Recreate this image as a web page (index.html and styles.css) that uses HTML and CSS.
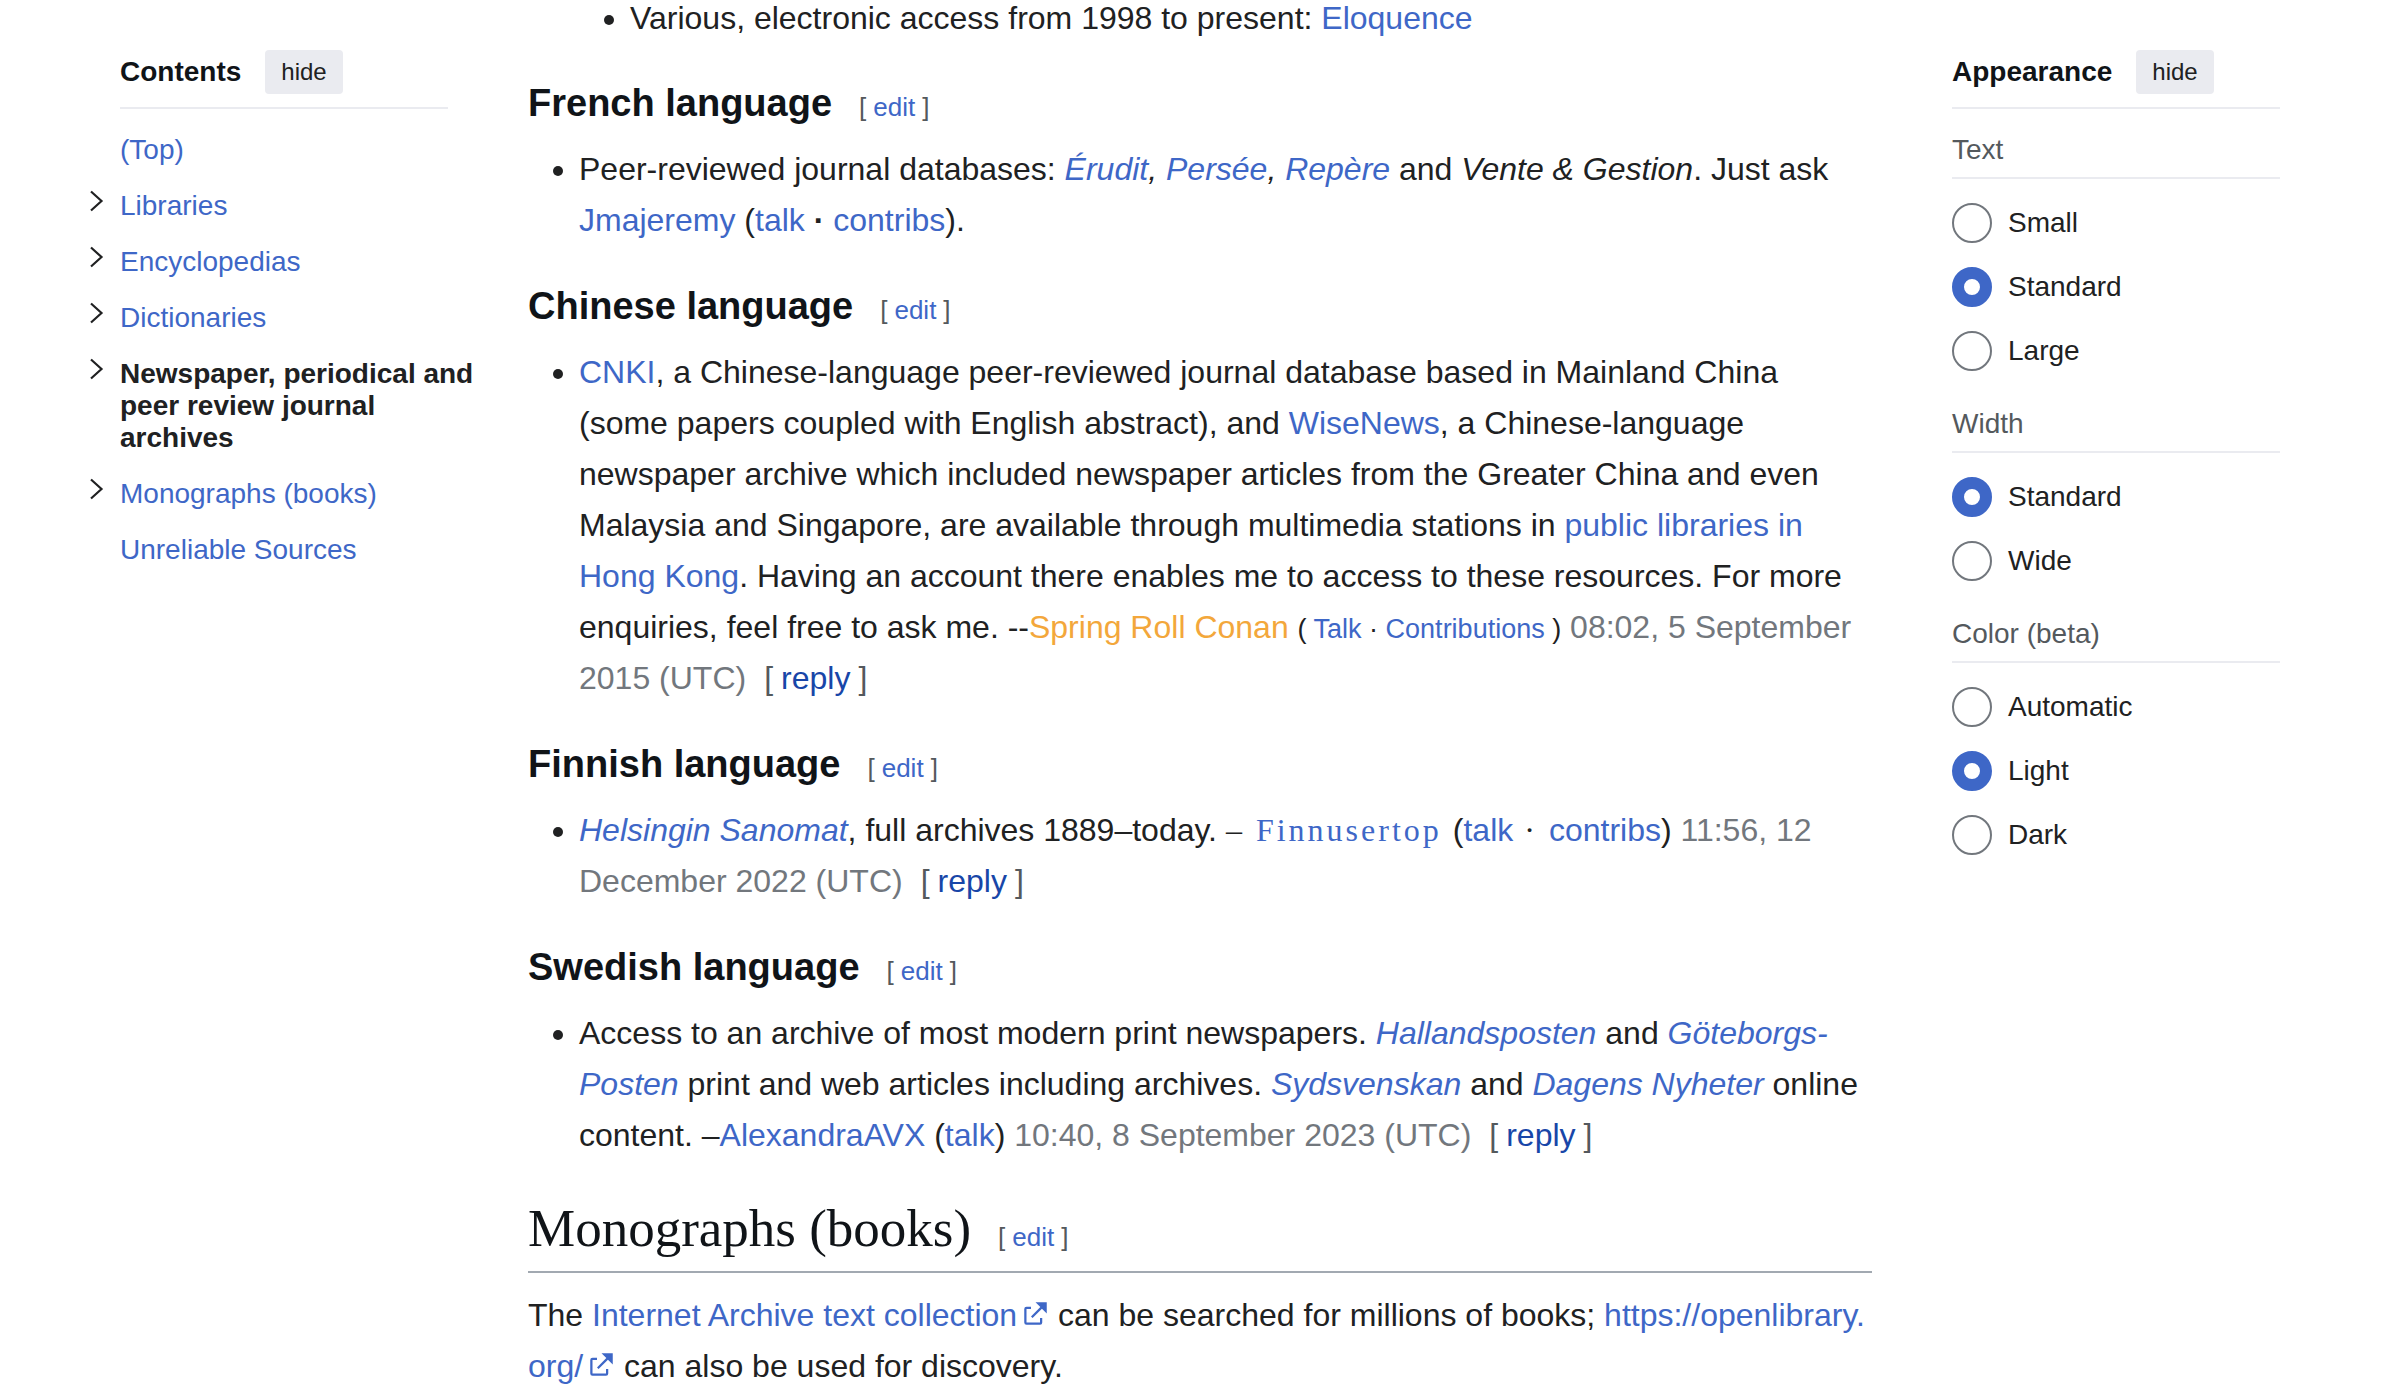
FILE: index.html
```html
<!DOCTYPE html>
<html lang="en">
<head>
<meta charset="utf-8">
<meta name="viewport" content="width=device-width, initial-scale=1">
<title>Resource exchange: shared resources</title>
<link rel="stylesheet" href="styles.css">
</head>
<body>
<svg class="sprite" aria-hidden="true">
  <symbol id="chevron" viewBox="0 0 14 22"><path d="M1 1.500 11.500 11 1 20.500" fill="none" stroke="currentColor" stroke-width="2.200"/></symbol>
  <symbol id="external" viewBox="0 0 12 12"><path fill="currentColor" d="M6 1h5v5L8.860 3.850 4.700 8 4 7.300l4.150-4.160zM2 3h2v1H2v6h6V8h1v2a1 1 0 0 1-1 1H2a1 1 0 0 1-1-1V4a1 1 0 0 1 1-1"/></symbol>
</svg>
<div class="page">
  <nav class="toc" aria-label="Contents">
    <div class="panel-header toc-header">
      <h2 class="panel-title">Contents</h2>
      <button class="hide-button" type="button">hide</button>
    </div>
    <ul class="toc-list">
      <li class="toc-item"><a class="toc-link" href="#top">(Top)</a></li>
      <li class="toc-item"><button class="toc-toggle" type="button" aria-label="Toggle Libraries subsection"><svg class="chevron"><use href="#chevron"/></svg></button><a class="toc-link" href="#libraries">Libraries</a></li>
      <li class="toc-item"><button class="toc-toggle" type="button" aria-label="Toggle Encyclopedias subsection"><svg class="chevron"><use href="#chevron"/></svg></button><a class="toc-link" href="#encyclopedias">Encyclopedias</a></li>
      <li class="toc-item"><button class="toc-toggle" type="button" aria-label="Toggle Dictionaries subsection"><svg class="chevron"><use href="#chevron"/></svg></button><a class="toc-link" href="#dictionaries">Dictionaries</a></li>
      <li class="toc-item"><button class="toc-toggle" type="button" aria-label="Toggle Newspaper archives subsection"><svg class="chevron"><use href="#chevron"/></svg></button><a class="toc-link toc-link-active" href="#newspapers">Newspaper, periodical and peer review journal archives</a></li>
      <li class="toc-item"><button class="toc-toggle" type="button" aria-label="Toggle Monographs subsection"><svg class="chevron"><use href="#chevron"/></svg></button><a class="toc-link" href="#monographs">Monographs (books)</a></li>
      <li class="toc-item"><a class="toc-link" href="#unreliable">Unreliable Sources</a></li>
    </ul>
  </nav>

  <main class="content">
    <ul class="bullets bullets-nested">
      <li>Various, electronic access from 1998 to present: <a href="#">Eloquence</a></li>
    </ul>

    <h3 class="subheading">French language<span class="edit">[<a href="#">edit</a>]</span></h3>
    <ul class="bullets">
      <li>Peer-reviewed journal databases: <i><a href="#">Érudit</a>, <a href="#">Persée</a>, <a href="#">Repère</a></i> and <i>Vente &amp; Gestion</i>. Just ask <a href="#">Jmajeremy</a> (<a href="#">talk</a> <b>·</b> <a href="#">contribs</a>).</li>
    </ul>

    <h3 class="subheading">Chinese language<span class="edit">[<a href="#">edit</a>]</span></h3>
    <ul class="bullets">
      <li><a href="#">CNKI</a>, a Chinese-language peer-reviewed journal database based in Mainland China (some papers coupled with English abstract), and <a href="#">WiseNews</a>, a Chinese-language newspaper archive which included newspaper articles from the Greater China and even Malaysia and Singapore, are available through multimedia stations in <a href="#">public libraries in Hong Kong</a>. Having an account there enables me to access to these resources. For more enquiries, feel free to ask me. --<a class="user-orange" href="#">Spring Roll Conan</a> <small class="user-links">( <a href="#">Talk</a> · <a href="#">Contributions</a> )</small> <span class="timestamp">08:02, 5 September 2015 (UTC)</span><span class="reply">[<a href="#">reply</a>]</span></li>
    </ul>

    <h3 class="subheading">Finnish language<span class="edit">[<a href="#">edit</a>]</span></h3>
    <ul class="bullets">
      <li><i><a href="#">Helsingin Sanomat</a></i>, full archives 1889–today. <span class="user-serif">– <a href="#">Finnusertop</a> </span>(<a href="#">talk</a><span class="user-serif"> · </span><a href="#">contribs</a>) <span class="timestamp">11:56, 12 December 2022 (UTC)</span><span class="reply">[<a href="#">reply</a>]</span></li>
    </ul>

    <h3 class="subheading">Swedish language<span class="edit">[<a href="#">edit</a>]</span></h3>
    <ul class="bullets">
      <li>Access to an archive of most modern print newspapers. <i><a href="#">Hallandsposten</a></i> and <i><a href="#">Göteborgs-Posten</a></i> print and web articles including archives. <i><a href="#">Sydsvenskan</a></i> and <i><a href="#">Dagens Nyheter</a></i> online content. –<a href="#">AlexandraAVX</a> (<a href="#">talk</a>) <span class="timestamp">10:40, 8 September 2023 (UTC)</span><span class="reply">[<a href="#">reply</a>]</span></li>
    </ul>

    <h2 class="heading" id="monographs">Monographs (books)<span class="edit">[<a href="#">edit</a>]</span></h2>
    <p class="paragraph">The <a href="#">Internet Archive text collection<svg class="external"><use href="#external"/></svg></a> can be searched for millions of books; <a href="#">https://openlibrary.<wbr>org/<svg class="external"><use href="#external"/></svg></a> can also be used for discovery.</p>
  </main>

  <aside class="appearance" aria-label="Appearance">
    <div class="panel-header">
      <h2 class="panel-title">Appearance</h2>
      <button class="hide-button" type="button">hide</button>
    </div>
    <fieldset class="options">
      <legend class="options-title">Text</legend>
      <label class="option"><input class="radio" type="radio" name="text">Small</label>
      <label class="option"><input class="radio" type="radio" name="text" checked>Standard</label>
      <label class="option"><input class="radio" type="radio" name="text">Large</label>
    </fieldset>
    <fieldset class="options">
      <legend class="options-title">Width</legend>
      <label class="option"><input class="radio" type="radio" name="width" checked>Standard</label>
      <label class="option"><input class="radio" type="radio" name="width">Wide</label>
    </fieldset>
    <fieldset class="options">
      <legend class="options-title">Color (beta)</legend>
      <label class="option"><input class="radio" type="radio" name="color">Automatic</label>
      <label class="option"><input class="radio" type="radio" name="color" checked>Light</label>
      <label class="option"><input class="radio" type="radio" name="color">Dark</label>
    </fieldset>
  </aside>
</div>
</body>
</html>
```
FILE: styles.css
```css
:root {
  --text: #202122;
  --heading: #101418;
  --subtle: #54595d;
  --muted: #72777d;
  --link: #3e67c7;
  --line: #eaebf0;
}

* {
  box-sizing: border-box;
}

body {
  margin: 0;
  background: #fff;
  color: var(--text);
  font-family: "Helvetica Neue", "Liberation Sans", Arial, sans-serif;
  font-size: 32px;
  line-height: 51px;
}

a {
  color: var(--link);
  text-decoration: none;
}

button {
  border: 0;
  font-family: inherit;
  color: inherit;
  cursor: pointer;
}

.sprite {
  display: none;
}

.page {
  display: grid;
  grid-template-columns: 408px minmax(0, 1fr) 328px;
  padding: 0 120px 0 72px;
}

/* Side panels */
.toc,
.appearance {
  padding-top: 50px;
  font-size: 28px;
  line-height: 32px;
}

.panel-header {
  display: flex;
  align-items: center;
  gap: 24px;
  padding-bottom: 13px;
  border-bottom: 2px solid var(--line);
}

.toc-header {
  margin: 0 32px 0 48px;
}

.panel-title {
  margin: 0;
  color: var(--heading);
  font-size: 28px;
  line-height: 44px;
}

.hide-button {
  padding: 0 16px;
  border-radius: 4px;
  background: var(--line);
  font-size: 24px;
  line-height: 44px;
}

.toc-list {
  display: flex;
  flex-direction: column;
  gap: 24px;
  margin: 0;
  padding: 25px 0 0;
  list-style: none;
}

.toc-item {
  display: grid;
  grid-template-columns: 48px 1fr;
  align-items: start;
}

.toc-link {
  grid-column: 2;
}

.toc-link-active {
  color: var(--text);
  font-weight: bold;
}

.toc-toggle {
  display: flex;
  padding: 0 0 0 18px;
  background: none;
}

.chevron {
  width: 14px;
  height: 22px;
}

.options {
  display: flex;
  flex-direction: column;
  gap: 24px;
  min-width: 0;
  margin: 25px 0 0;
  padding: 0;
  border: 0;
}

.options + .options {
  margin-top: 37px;
}

.options-title {
  width: 100%;
  margin-bottom: 24px;
  padding: 0 0 11px;
  border-bottom: 2px solid var(--line);
  color: var(--subtle);
}

.option {
  display: flex;
  align-items: center;
  gap: 16px;
}

.radio {
  appearance: none;
  width: 40px;
  height: 40px;
  margin: 0;
  border: 2px solid var(--muted);
  border-radius: 50%;
  background: #fff;
}

.radio:checked {
  border: 12px solid var(--link);
}

/* Article */
.content {
  padding: 0 80px 0 48px;
}

.bullets {
  margin: 0;
  padding-left: 51px;
}

.bullets-nested {
  margin-top: -7px;
  padding-left: 102px;
}

.subheading {
  margin: 30px 0 11px;
  color: var(--heading);
  font-size: 38px;
  line-height: 60px;
}

.bullets-nested + .subheading {
  margin-top: 29px;
}

.heading {
  margin: 31px 0 17px;
  padding-bottom: 7px;
  border-bottom: 2px solid #a2a9b1;
  color: var(--heading);
  font-family: Georgia, "Liberation Serif", serif;
  font-size: 53px;
  font-weight: normal;
  line-height: 72px;
}

.edit {
  margin-left: 27px;
  color: var(--subtle);
  font-family: "Helvetica Neue", "Liberation Sans", Arial, sans-serif;
  font-size: 26px;
  font-weight: normal;
  line-height: 32px;
}

.edit a {
  margin: 0 7px;
}

.reply {
  margin-left: 18px;
  color: var(--subtle);
  white-space: nowrap;
}

.reply a {
  margin: 0 8px;
  color: #1846a8;
}

.timestamp {
  color: var(--muted);
}

.user-orange {
  color: #f3a73b;
}

.user-links {
  font-size: 27px;
  line-height: 32px;
}

/* This editor's signature is set in widely spaced serif letters */
.user-serif {
  font-family: "Liberation Serif", "Times New Roman", serif;
  letter-spacing: 3px;
  line-height: 32px;
}

.paragraph {
  margin: 0;
}

.external {
  width: 27px;
  height: 27px;
  margin-left: 5px;
  vertical-align: -1px;
}
```
